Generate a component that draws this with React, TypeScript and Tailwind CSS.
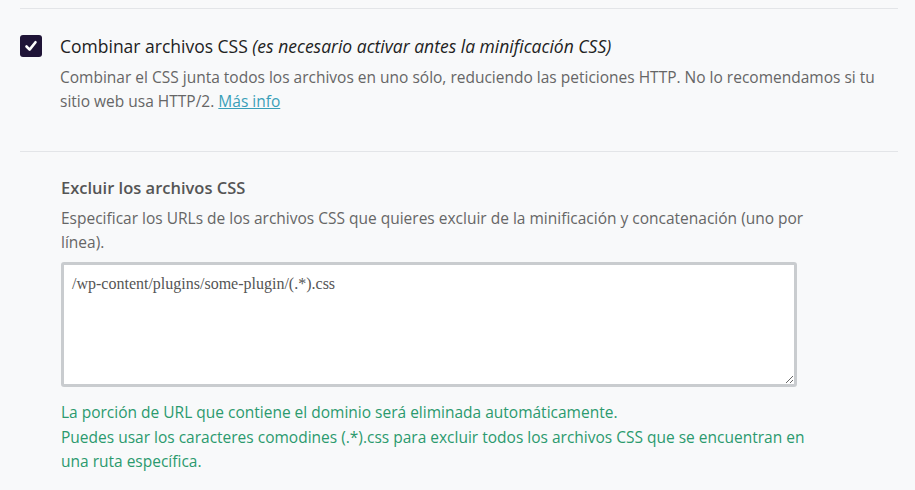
export default function App() {
  return (
    <div className="min-h-[490px] bg-[#f8f9fa] pl-5 pr-[17px] pt-2 font-['Open_Sans',sans-serif]">
      {/* Combine CSS option */}
      <div className="border-t border-[#e3e5e8] pt-[25px] pb-[38px]">
        <div className="flex items-start gap-[18px]">
          <div className="mt-px flex h-[22px] w-[22px] shrink-0 items-center justify-center rounded-[3px] bg-[#1f1437]">
            <svg width="14" height="14" viewBox="0 0 14 14" fill="none">
              <path d="M2.5 7.5 L5.6 10.6 L11.5 3.2" stroke="white" strokeWidth="2.6" strokeLinecap="round" strokeLinejoin="round" />
            </svg>
          </div>
          <div>
            <p className="text-[17.5px] leading-6 text-[#222]">
              Combinar archivos CSS <em>(es necesario activar antes la minificación CSS)</em>
            </p>
            <p className="mt-[7px] text-[15.5px] leading-6 text-[#666]">
              Combinar el CSS junta todos los archivos en uno sólo, reduciendo las peticiones HTTP. No lo recomendamos si tu sitio web usa HTTP/2.{' '}
              <a href="#" className="text-[#3a9fb8] underline">Más info</a>
            </p>
          </div>
        </div>
      </div>

      {/* Exclude CSS files */}
      <div className="border-t border-[#e3e5e8] pl-[41px] pt-6">
        <div className="w-[752px]">
          <h3 className="text-[16.5px] font-semibold leading-6 text-[#555]">Excluir los archivos CSS</h3>
          <p className="mt-[6px] text-[15.5px] leading-6 text-[#666]">
            Especificar los URLs de los archivos CSS que quieres excluir de la minificación y concatenación (uno por línea).
          </p>
          <textarea
            className="mt-[8px] block h-[125px] w-[736px] resize-y rounded-[3px] border-[3px] border-[#c9cccf] bg-white px-2 py-[9px] font-['Liberation_Serif',serif] text-[16px] leading-5 text-[#555] outline-none"
            defaultValue="/wp-content/plugins/some-plugin/(.*).css"
          />
          <p className="mt-[13px] text-[15.5px] leading-[24.5px] text-[#2b9a6e]">
            La porción de URL que contiene el dominio será eliminada automáticamente.
            <br />
            Puedes usar los caracteres comodines (.*).css para excluir todos los archivos CSS que se encuentran en una ruta específica.
          </p>
        </div>
      </div>
    </div>
  )
}
